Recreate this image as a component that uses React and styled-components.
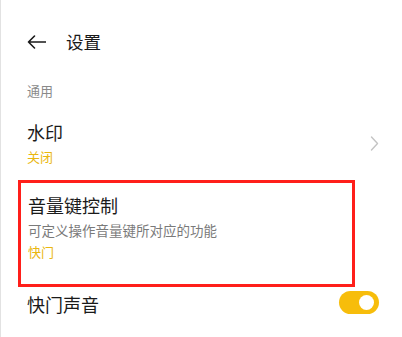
import React from "react";
import styled, { createGlobalStyle } from "styled-components";

const Global = createGlobalStyle`
  html, body { margin: 0; padding: 0; background: #ffffff; }
  body { font-family: "Noto Sans CJK SC", "Noto Sans", sans-serif; }
`;

const Page = styled.div`
  width: 402px;
  height: 337px;
  box-sizing: border-box;
  border-left: 1px solid #e2e2e2;
  overflow: hidden;
  background: #fff;
`;

const Header = styled.div`
  display: flex;
  align-items: center;
  height: 28px;
  margin-top: 28px;
  padding-left: 25px;
`;

const BackButton = styled.button`
  display: flex;
  align-items: center;
  justify-content: center;
  width: 20px;
  height: 28px;
  padding: 0;
  border: none;
  background: none;
  color: #1a1a1a;
`;

const Title = styled.h1`
  margin: 0 0 0 20px;
  font-size: 17.5px;
  line-height: 28px;
  font-weight: 400;
  color: #1a1a1a;
`;

const SectionLabel = styled.div`
  margin-top: 26px;
  padding-left: 26px;
  font-size: 13px;
  line-height: 18px;
  color: #8a8a8a;
`;

const Item = styled.div`
  display: flex;
  align-items: center;
  padding: ${(p) => p.$pad || "0"};
  padding-right: 23px;
`;

const ItemText = styled.div`
  flex: 1;
  display: flex;
  flex-direction: column;
`;

const ItemTitle = styled.div`
  font-size: 18px;
  line-height: 24px;
  color: #1a1a1a;
  padding-top: ${(p) => p.$shift || 0}px;
`;

const ItemDesc = styled.div`
  margin-top: 4px;
  font-size: 13.5px;
  line-height: 18px;
  color: #7a7a7a;
`;

const ItemValue = styled.div`
  margin-top: 4px;
  font-size: 13px;
  line-height: 18px;
  color: #eab70f;
`;

const Highlight = styled.div`
  margin: 14px 0 0 17px;
  width: 337px;
  box-sizing: border-box;
  border: 3px solid #ff1f1a;
  padding: 10px 7px 23px;
`;

const Chevron = styled.span`
  display: flex;
  color: #c4c4c4;
`;

const Toggle = styled.span`
  position: relative;
  display: inline-block;
  width: 40px;
  height: 23px;
  border-radius: 12px;
  background: #f7bd0b;
  &::after {
    content: "";
    position: absolute;
    right: 5px;
    top: 4px;
    width: 15px;
    height: 15px;
    border-radius: 50%;
    background: #fff;
  }
`;

export default function App() {
  return (
    <>
      <Global />
      <Page>
        <Header>
          <BackButton aria-label="返回">
            <svg width="19" height="14" viewBox="0 0 19 14" fill="none">
              <path d="M7.5 1 L1.5 7 L7.5 13 M1.5 7 H18.5" stroke="#1a1a1a" strokeWidth="1.6" strokeLinecap="round" strokeLinejoin="round" />
            </svg>
          </BackButton>
          <Title>设置</Title>
        </Header>
        <SectionLabel>通用</SectionLabel>
        <Item $pad="20px 0 0 26px">
          <ItemText>
            <ItemTitle>水印</ItemTitle>
            <ItemValue>关闭</ItemValue>
          </ItemText>
          <Chevron>
            <svg width="9" height="15" viewBox="0 0 9 15" fill="none">
              <path d="M1.5 1 L7.5 7.5 L1.5 14" stroke="currentColor" strokeWidth="1.4" strokeLinecap="round" strokeLinejoin="round" />
            </svg>
          </Chevron>
        </Item>
        <Highlight>
          <ItemText>
            <ItemTitle>音量键控制</ItemTitle>
            <ItemDesc>可定义操作音量键所对应的功能</ItemDesc>
            <ItemValue>快门</ItemValue>
          </ItemText>
        </Highlight>
        <Item $pad="2px 0 0 26px">
          <ItemText>
            <ItemTitle $shift={3}>快门声音</ItemTitle>
          </ItemText>
          <Toggle role="switch" aria-checked="true" />
        </Item>
      </Page>
    </>
  );
}
